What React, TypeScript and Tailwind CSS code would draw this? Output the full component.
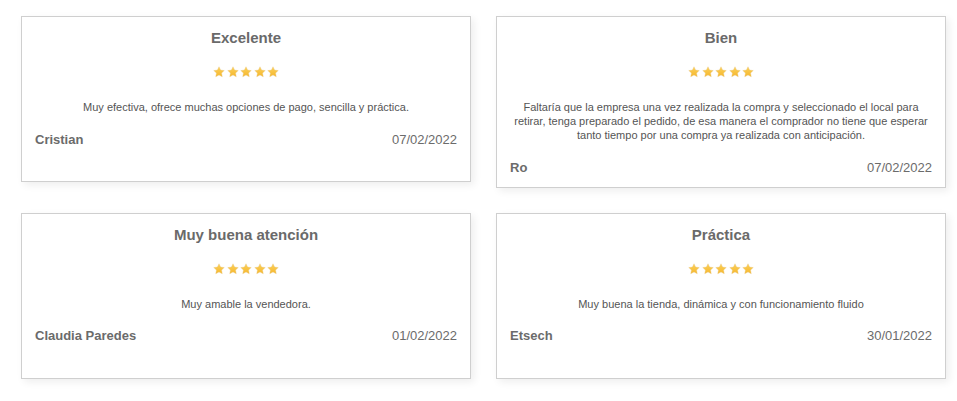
const reviews = [
  {
    title: 'Excelente',
    body: 'Muy efectiva, ofrece muchas opciones de pago, sencilla y práctica.',
    name: 'Cristian',
    date: '07/02/2022',
  },
  {
    title: 'Bien',
    body: 'Faltaría que la empresa una vez realizada la compra y seleccionado el local para retirar, tenga preparado el pedido, de esa manera el comprador no tiene que esperar tanto tiempo por una compra ya realizada con anticipación.',
    name: 'Ro',
    date: '07/02/2022',
  },
  {
    title: 'Muy buena atención',
    body: 'Muy amable la vendedora.',
    name: 'Claudia Paredes',
    date: '01/02/2022',
  },
  {
    title: 'Práctica',
    body: 'Muy buena la tienda, dinámica y con funcionamiento fluido',
    name: 'Etsech',
    date: '30/01/2022',
  },
];

function Star() {
  return (
    <svg width="12" height="12" viewBox="0 0 24 24">
      <defs>
        <linearGradient id="starFill" x1="0" y1="0" x2="0" y2="1">
          <stop offset="0%" stopColor="#fcd15a" />
          <stop offset="100%" stopColor="#f5b72e" />
        </linearGradient>
      </defs>
      <path
        d="M12 1.5l3.2 6.6 7.3 1-5.3 5.1 1.3 7.2L12 18l-6.5 3.4 1.3-7.2L1.5 9.1l7.3-1z"
        fill="url(#starFill)"
        stroke="#e9c98a"
        strokeWidth="0.8"
      />
    </svg>
  );
}

function ReviewCard({ review }: { review: (typeof reviews)[number] }) {
  return (
    <div className="min-h-[166px] border border-[#cfcfcf] bg-white px-[13px] pt-[12px] pb-[12px] shadow-[3px_3px_8px_rgba(0,0,0,0.07)]">
      <h3 className="text-center text-[15px] leading-[17px] font-bold text-[#6a6a6a]">{review.title}</h3>
      <div className="mt-[20px] flex justify-center gap-[1.5px]">
        {[0, 1, 2, 3, 4].map((i) => (
          <Star key={i} />
        ))}
      </div>
      <p className="mt-[22px] text-center text-[11px] leading-[14px] text-[#555]">{review.body}</p>
      <div className="mt-[17.5px] flex items-center justify-between text-[13px] leading-[15px] text-[#6b6b6b]">
        <span className="font-bold">{review.name}</span>
        <span>{review.date}</span>
      </div>
    </div>
  );
}

export default function App() {
  return (
    <div
      className="min-h-screen bg-white pl-[21px] pr-[11px] pt-[16px]"
      style={{ fontFamily: '"Liberation Sans", Arial, sans-serif' }}
    >
      <div className="grid grid-cols-[450px_450px] items-start gap-[25px]">
        {reviews.map((r) => (
          <ReviewCard key={r.title} review={r} />
        ))}
      </div>
    </div>
  );
}
